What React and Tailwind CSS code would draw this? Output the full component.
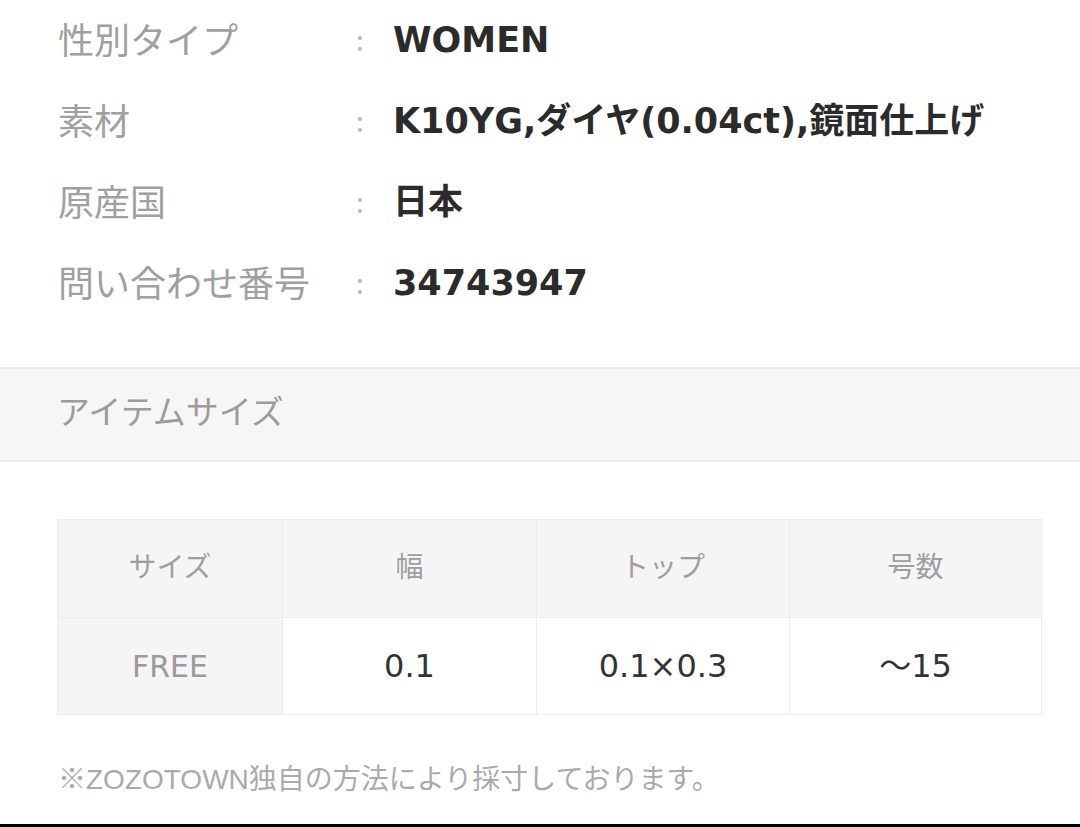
export default function App() {
  const font = { fontFamily: '"DejaVu Sans", "Noto Sans CJK JP", sans-serif' };
  const cjk = { fontFamily: '"Noto Sans CJK JP", sans-serif' };
  const rows = [
    ["性別タイプ", "WOMEN"],
    ["素材", "K10YG,ダイヤ(0.04ct),鏡面仕上げ"],
    ["原産国", "日本"],
    ["問い合わせ番号", "34743947"],
  ];
  return (
    <div className="w-[1080px] h-[827px] bg-white flex flex-col overflow-hidden" style={font}>
      <div className="flex flex-col">
        {rows.map(([l, v]) => (
          <div key={l} className="h-[81px] flex items-center">
            <div className="w-[355px] pl-[58px] mb-[6px] text-[36px] text-[#a0a0a0] whitespace-nowrap" style={cjk}>{l}</div>
            <div className="w-[38px] pl-[1px] mb-[4px] text-[28px] text-[#b8b8b8] leading-none" style={cjk}>:</div>
            <div className="text-[35px] font-bold text-[#2b2b2b] whitespace-nowrap">{v}</div>
          </div>
        ))}
      </div>
      <div className="mt-[43px] h-[95px] bg-[#f6f6f6] border-t-2 border-b-2 border-[#ececec] flex items-center pl-[57px]">
        <span className="mb-[8px] text-[33px] text-[#9c9c9c]" style={cjk}>アイテムサイズ</span>
      </div>
      <div className="mt-[57px] ml-[57px] w-[985px] border border-[#ececec] grid grid-cols-[225px_254px_253px_1fr]">
        {["サイズ", "幅", "トップ", "号数"].map((h, i) => (
          <div key={h} className={`h-[98px] pb-[8px] bg-[#f5f5f5] flex items-center justify-center text-[28px] text-[#9e9e9e] border-b border-[#ececec] ${i < 3 ? "border-r" : ""}`} style={cjk}>{h}</div>
        ))}
        <div className="h-[96px] bg-[#f5f5f5] flex items-center justify-center text-[30px] text-[#9a9a9a] border-r border-[#ececec]">FREE</div>
        <div className="h-[96px] bg-white flex items-center justify-center text-[32px] text-[#333] border-r border-[#ececec]">0.1</div>
        <div className="h-[96px] bg-white flex items-center justify-center text-[32px] text-[#333] border-r border-[#ececec]">0.1×0.3</div>
        <div className="h-[96px] bg-white flex items-center justify-center text-[32px] text-[#333]">〜15</div>
      </div>
      <div className="mt-[44px] pl-[58px] text-[28px] text-[#aaaaaa] whitespace-nowrap" style={{ fontFamily: '"Liberation Sans", "Noto Sans CJK JP", sans-serif' }}>※ZOZOTOWN独自の方法により採寸しております。</div>
      <div className="flex-1" />
      <div className="h-[3px] bg-black" />
    </div>
  );
}
